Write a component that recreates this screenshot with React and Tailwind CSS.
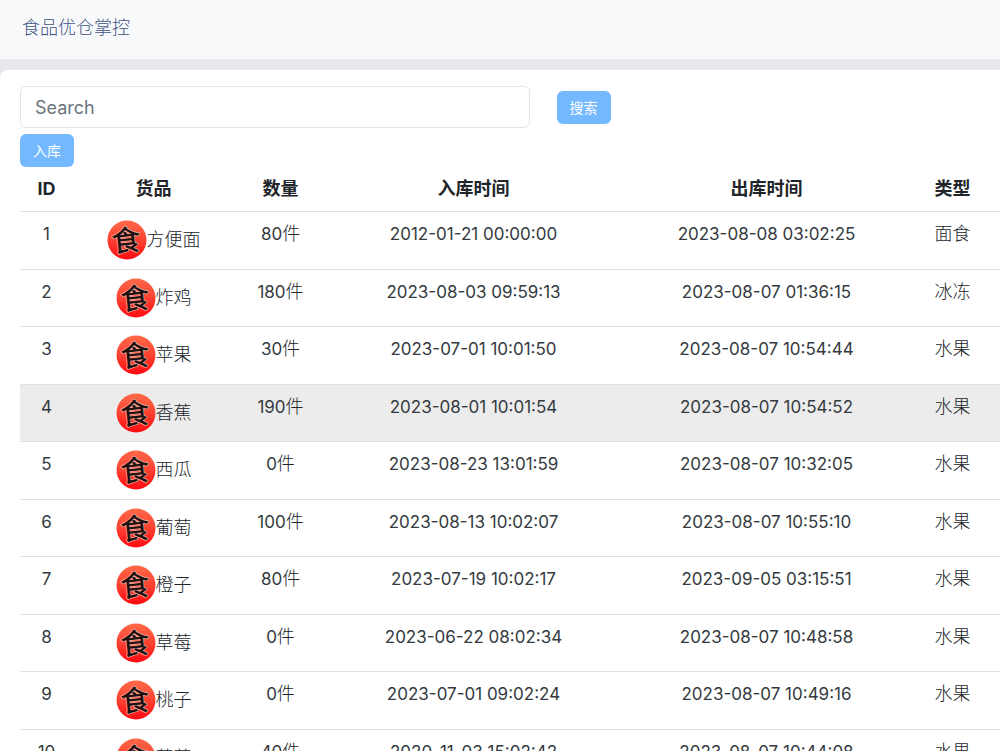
import React from 'react';

const goods = [
  { id: 1, name: '方便面', count: '80', inTime: '2012-01-21 00:00:00', outTime: '2023-08-08 03:02:25', type: '面食' },
  { id: 2, name: '炸鸡', count: '180', inTime: '2023-08-03 09:59:13', outTime: '2023-08-07 01:36:15', type: '冰冻' },
  { id: 3, name: '苹果', count: '30', inTime: '2023-07-01 10:01:50', outTime: '2023-08-07 10:54:44', type: '水果' },
  { id: 4, name: '香蕉', count: '190', inTime: '2023-08-01 10:01:54', outTime: '2023-08-07 10:54:52', type: '水果', active: true },
  { id: 5, name: '西瓜', count: '0', inTime: '2023-08-23 13:01:59', outTime: '2023-08-07 10:32:05', type: '水果' },
  { id: 6, name: '葡萄', count: '100', inTime: '2023-08-13 10:02:07', outTime: '2023-08-07 10:55:10', type: '水果' },
  { id: 7, name: '橙子', count: '80', inTime: '2023-07-19 10:02:17', outTime: '2023-09-05 03:15:51', type: '水果' },
  { id: 8, name: '草莓', count: '0', inTime: '2023-06-22 08:02:34', outTime: '2023-08-07 10:48:58', type: '水果' },
  { id: 9, name: '桃子', count: '0', inTime: '2023-07-01 09:02:24', outTime: '2023-08-07 10:49:16', type: '水果' },
  { id: 10, name: '葡萄', count: '40', inTime: '2020-11-03 15:02:42', outTime: '2023-08-07 10:44:08', type: '水果' },
];

const FoodLogo = () => (
  <svg viewBox="0 0 40 40" className="size-10 shrink-0" aria-hidden="true">
    <defs>
      <linearGradient id="food-logo" x1="0" y1="0" x2="0" y2="1">
        <stop offset="0" stopColor="#ff6a48" />
        <stop offset="0.5" stopColor="#fb4233" />
        <stop offset="1" stopColor="#ff0a10" />
      </linearGradient>
    </defs>
    <circle cx="20" cy="20" r="19.5" fill="url(#food-logo)" />
    <text
      x="19"
      y="31"
      textAnchor="middle"
      fontSize="29"
      fontWeight="500"
      fill="#1f1010"
      stroke="#f9a596"
      strokeWidth="1.5"
      strokeLinejoin="round"
      paintOrder="stroke"
      transform="rotate(-6 20 20)"
    >
      食
    </text>
  </svg>
);

const App = () => {
  return (
    <div className="h-screen overflow-hidden bg-[#e9e7ee] font-['Inter','Noto_Sans_CJK_SC',sans-serif] text-[#212529]">
      <header className="mb-[11px] bg-[#f8f9fb] px-[22px] pt-[14px] pb-[17px]">
        <a href="#" className="block text-[18px] leading-7 font-light text-[#3f5583]">食品优仓掌控</a>
      </header>

      <main className="rounded-tl-lg bg-white pt-4 pl-5">
        <form className="flex items-center gap-[27px]" onSubmit={(e) => e.preventDefault()}>
          <input
            type="search"
            placeholder="Search"
            aria-label="Search"
            className="h-[42px] w-[52%] rounded-md border border-[#e2e5e9] px-[14px] text-[18px] placeholder:text-[#6c757d]"
          />
          <button type="submit" className="h-[33px] rounded-md bg-[#74b8ff] px-[13px] text-[14px] text-white">
            搜索
          </button>
        </form>
        <button type="button" className="mt-[6px] block h-[33px] rounded-md bg-[#74b8ff] px-[13px] text-[14px] text-white">
          入库
        </button>

        <table className="w-full table-fixed text-center text-[18px] leading-[26px]">
          <colgroup>
            <col className="w-[53px]" />
            <col className="w-[161px]" />
            <col className="w-[93px]" />
            <col />
            <col />
            <col className="w-[87px]" />
          </colgroup>
          <thead>
            <tr className="h-11 border-b border-[#dee2e6] font-bold">
              <th>ID</th>
              <th>货品</th>
              <th>数量</th>
              <th>入库时间</th>
              <th>出库时间</th>
              <th className="pr-2">类型</th>
            </tr>
          </thead>
          <tbody>
            {goods.map((g) => (
              <tr
                key={g.id}
                className={`border-b border-[#dee2e6] align-top font-light odd:h-[58px] even:h-[57px] ${g.active ? 'bg-[#ececec]' : ''}`}
              >
                <td className="pt-[9px] text-[17px] font-normal text-[#343a40]">{g.id}</td>
                <td className="pt-2">
                  <div className="flex items-center justify-center">
                    <FoodLogo />
                    {g.name}
                  </div>
                </td>
                <td className="pt-[9px]">
                  <span className="text-[17px] font-normal text-[#343a40]">{g.count}</span>件
                </td>
                <td className="pt-[9px] text-[17px] font-normal text-[#343a40]">{g.inTime}</td>
                <td className="pt-[9px] text-[17px] font-normal text-[#343a40]">{g.outTime}</td>
                <td className="pt-[9px] pr-2">{g.type}</td>
              </tr>
            ))}
          </tbody>
        </table>
      </main>
    </div>
  );
};

export default App;
